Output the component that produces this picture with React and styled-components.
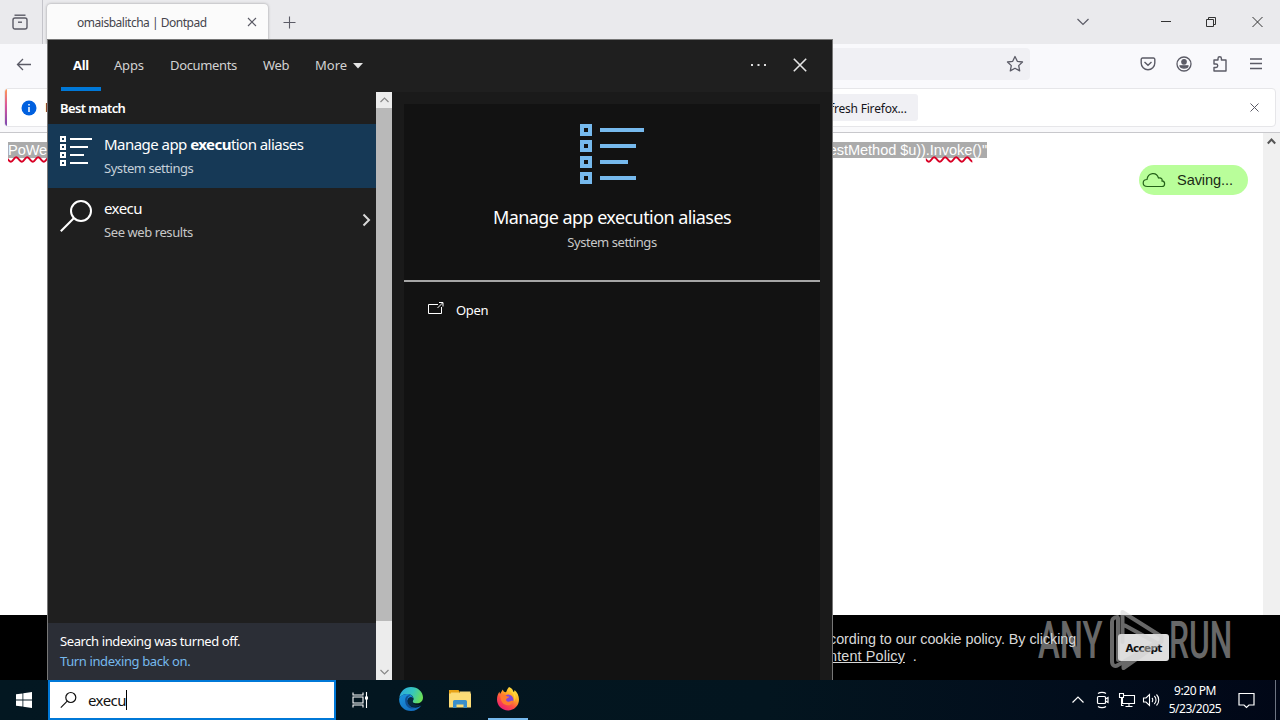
import React from "react";
import styled, { createGlobalStyle } from "styled-components";

const Global = createGlobalStyle`
  * { box-sizing: border-box; }
  body { margin: 0; overflow: hidden; background: #fff; }
`;

const segoe = `"Noto Sans", "Open Sans", sans-serif`;

const Desktop = styled.div`
  position: relative;
  width: 1280px;
  height: 720px;
  overflow: hidden;
  display: flex;
  flex-direction: column;
  font-family: ${segoe};
`;

const Text = styled.span`
  font-size: ${(p) => p.$size || 13}px;
  line-height: ${(p) => p.$lh || 20}px;
  letter-spacing: ${(p) => p.$ls || 0}px;
  color: ${(p) => p.$color || "#fff"};
  font-weight: ${(p) => p.$weight || 400};
  white-space: pre;
`;

/* Browser */
const TabStrip = styled.div`
  height: 44px;
  background: #eaeaed;
  display: flex;
  color: #5b5b66;
`;
const ViewButton = styled.div`
  width: 43px;
  height: 44px;
  border-right: 1px solid #c4c4ca;
  padding: 14px 0 0 12px;
`;
const Tab = styled.div`
  width: 221px;
  height: 40px;
  margin: 4px 0 0 4px;
  background: #fbfbfb;
  border-radius: 4px 4px 0 0;
  box-shadow: 0 0 3px rgba(0, 0, 0, 0.35);
  display: flex;
  justify-content: space-between;
  padding: 9px 11px 0 30px;
`;
const NewTab = styled.div`
  padding: 16px 0 0 15px;
  flex: 1;
`;
const WindowControls = styled.div`
  display: flex;
  padding: 15px 17px 0 0;
  gap: 35px;
`;
const ControlGap = styled.div`
  width: 2px;
`;
const Toolbar = styled.div`
  height: 44px;
  background: #f9f9fc;
  display: flex;
  align-items: flex-start;
  padding: 4px 16px 0;
`;
const BackButton = styled.div`
  width: 84px;
  padding-top: 10px;
`;
const UrlBar = styled.div`
  width: 930px;
  height: 32px;
  background: #f0f0f4;
  border-radius: 4px;
  display: flex;
  justify-content: flex-end;
  align-items: center;
  padding-right: 6px;
`;
const ToolbarIcons = styled.div`
  flex: 1;
  display: flex;
  justify-content: flex-end;
  gap: 20px;
  padding-top: 8px;
`;
const NoticeArea = styled.div`
  height: 45px;
  background: #f9f9fb;
  border-bottom: 1px solid #c8c8cc;
  padding: 0 4px 5px;
`;
const Notice = styled.div`
  height: 39px;
  background: #fff;
  border: 1px solid #e6e6e9;
  border-radius: 4px;
  display: flex;
  overflow: hidden;
`;
const NoticeStripe = styled.div`
  width: 2px;
  background: linear-gradient(#ff9a55, #d9559d 45%, #7a49b0);
`;
const InfoSlot = styled.div`
  padding: 11px 0 0 14px;
  width: 820px;
  display: flex;
  gap: 8px;
  font-family: "Liberation Sans", sans-serif;
`;
const RefreshButton = styled.div`
  width: 91px;
  height: 27px;
  margin: 5px auto 0 0;
  padding-left: 3px;
  background: #f0f0f4;
  border-radius: 3px;
`;
const NoticeClose = styled.div`
  padding: 14px 16px 0 0;
`;
const PageRow = styled.div`
  height: 482px;
  display: flex;
  background: #fff;
`;
const PageBody = styled.div`
  flex: 1;
  padding: 9px 15px 0 8px;
  display: flex;
  flex-direction: column;
`;
const CodeLine = styled.div`
  width: 979px;
  height: 16px;
  background: #ababab;
  display: flex;
  color: #fff;
  font: 14.6px/16px "Liberation Sans", Arial, sans-serif;
  letter-spacing: -0.08px;
  white-space: pre;
`;
const CodeStart = styled.span`
  width: 824px;
`;
const Misspelt = styled.span`
  text-decoration: underline wavy #d90024 1.5px;
  text-decoration-skip-ink: none;
  text-underline-offset: 1px;
`;
const SavePill = styled.div`
  align-self: flex-end;
  width: 109px;
  height: 30px;
  margin-top: 7px;
  border-radius: 15px;
  background: #b9fe9a;
  display: flex;
  align-items: center;
  gap: 11px;
  padding-left: 3px;
  color: #1b2b16;
  font: 14.6px/29px "Liberation Sans", Arial, sans-serif;
  letter-spacing: -0.1px;
`;
const PageScroll = styled.div`
  width: 17px;
  background: #f0f0f0;
  padding: 4px 0 0 4px;
`;
const CookieBar = styled.div`
  height: 65px;
  background: #000;
  display: flex;
  padding: 16px 0 0 829px;
  color: #d8d8d8;
  font: 14.4px/17px "Liberation Sans", Arial, sans-serif;
  white-space: pre;
`;
const CookieText = styled.div`
  width: 289px;
  letter-spacing: -0.05px;
`;
const PolicyLink = styled.u`
  letter-spacing: 0.13px;
`;
const AcceptButton = styled.div`
  width: 51px;
  height: 27px;
  margin-top: 3px;
  border-radius: 3px;
  background: #dedede;
  color: #111;
  text-align: center;
  font: bold 10.5px/28px "DejaVu Sans", sans-serif;
  letter-spacing: -0.7px;
`;

/* Search flyout */
const Flyout = styled.div`
  position: absolute;
  left: 47px;
  top: 39px;
  width: 786px;
  height: 641px;
  background: #1f1f1f;
  border: 1px solid #777;
  border-bottom: 0;
  display: flex;
  flex-direction: column;
`;
const FlyoutTabs = styled.div`
  height: 52px;
  display: flex;
  padding: 0 25px 0 13px;
`;
const FlyoutTab = styled.div`
  width: ${(p) => p.$w}px;
  height: 51px;
  padding: 15px 0 0 ${(p) => p.$pl || 0}px;
  border-bottom: 4px solid ${(p) => (p.$active ? "#0078d7" : "transparent")};
  display: flex;
  gap: 6px;
`;
const FlyoutActions = styled.div`
  margin-left: auto;
  display: flex;
  gap: 27px;
  padding-top: 18px;
`;
const FlyoutBody = styled.div`
  flex: 1;
  display: flex;
`;
const Results = styled.div`
  width: 328px;
  display: flex;
  flex-direction: column;
`;
const Heading = styled.div`
  height: 32px;
  padding: 6px 12px;
  display: flex;
`;
const Result = styled.div`
  height: 64px;
  background: ${(p) => (p.$selected ? "#163956" : "transparent")};
  display: flex;
  gap: 12px;
  padding: 12px 5px 0 12px;
`;
const ResultText = styled.div`
  display: flex;
  flex-direction: column;
  gap: 4px;
  flex: 1;
  margin-top: -2px;
`;
const ResultArrow = styled.div`
  padding-top: 13px;
`;
const IndexNotice = styled.div`
  height: 57px;
  margin-top: auto;
  background: #2b2e36;
  padding: 8px 12px 0;
  display: flex;
  flex-direction: column;
`;
const ResultsScroll = styled.div`
  width: 16px;
  background: #ececec;
  display: flex;
  flex-direction: column;
`;
const ScrollEnd = styled.div`
  height: 16px;
  display: grid;
  place-items: center;
  margin-top: ${(p) => (p.$last ? "auto" : 0)};
`;
const ScrollThumb = styled.div`
  height: 513px;
  background: #b9b9b9;
`;
const DetailArea = styled.div`
  flex: 1;
  background: #1a1a1a;
  padding: 12px 12px 0;
`;
const Detail = styled.div`
  height: 100%;
  background: #121212;
`;
const DetailHeader = styled.div`
  height: 178px;
  border-bottom: 2px solid #a5a5a5;
  padding-top: 20px;
  display: flex;
  flex-direction: column;
  align-items: center;
`;
const DetailTitle = styled(Text)`
  margin-top: 20px;
`;
const DetailAction = styled.div`
  display: flex;
  gap: 12px;
  padding: 18px 24px;
`;

/* Taskbar */
const Taskbar = styled.div`
  height: 40px;
  display: flex;
  background: linear-gradient(90deg, #031721, #03151f 60%, #020d1c 85%, #010717);
`;
const StartButton = styled.div`
  width: 48px;
  padding: 11px 0 0 16px;
`;
const SearchBox = styled.div`
  width: 288px;
  height: 40px;
  background: #fff;
  border: 2px solid #0078d7;
  padding: 8px 0 0 10px;
  display: flex;
  gap: 11px;
`;
const SearchGlyph = styled.div`
  padding-top: 1px;
`;
const Caret = styled.i`
  width: 1px;
  height: 20px;
  background: #000;
  margin-left: -11px;
`;
const TaskItem = styled.div`
  width: ${(p) => p.$w || 49}px;
  height: 40px;
  display: grid;
  place-items: center;
  border-bottom: 2px solid transparent;
`;
const FirstItem = styled(TaskItem)`
  padding: 1px 2px 0 0;
`;
const ActiveItem = styled(TaskItem)`
  width: 40px;
  margin-left: 4px;
  border-bottom-color: #76b9ed;
`;
const Tray = styled.div`
  margin-left: auto;
  display: flex;
  align-items: center;
  border-right: 1px solid #6d7482;
  margin-right: 4px;
`;
const TrayIcons = styled.div`
  display: flex;
  align-items: center;
  gap: 6px;
`;
const Clock = styled.div`
  width: 70px;
  display: flex;
  flex-direction: column;
  align-items: center;
`;
const ActionCenter = styled.div`
  width: 45px;
  padding: 1px 0 0 8px;
`;

const Watermark = styled.div`
  position: absolute;
  left: 1038px;
  top: 608px;
  height: 66px;
  width: 200px;
  display: flex;
  opacity: 0.5;
`;
const MarkWord = styled.div`
  width: ${(p) => p.$w}px;
  font: 500 52px/66px Roboto, sans-serif;
  color: #d0d0d0;
  white-space: nowrap;
  transform: scaleX(${(p) => p.$sx});
  transform-origin: 0 0;
`;

const Line = ({ w = 16, h = 16, sw = 1.2, c = "#5b5b66", d, children, vb }) => (
  <svg width={w} height={h} viewBox={vb || `0 0 ${w} ${h}`} fill="none" stroke={c} strokeWidth={sw} style={{ display: "block", flex: "none" }}>
    {d && <path d={d} />}
    {children}
  </svg>
);

const ListIcon = () => (
  <svg width="32" height="32" viewBox="0 0 32 32" fill="none" stroke="#fff" strokeWidth="2" style={{ flex: "none" }} shapeRendering="crispEdges">
    {[0, 8, 16, 24].map((y, i) => (
      <g key={y}>
        <rect x="1" y={y + 1} width="4" height="4" />
        <path d={`M10 ${y + 3}H${[32, 28, 24, 28][i]}`} />
      </g>
    ))}
  </svg>
);

const BigListIcon = () => (
  <svg width="64" height="60" viewBox="0 0 64 60" fill="none" stroke="#76b9ed" strokeWidth="4" shapeRendering="crispEdges">
    {[0, 16, 32, 48].map((y, i) => (
      <g key={y}>
        <rect x="2" y={y + 2} width="8" height="8" />
        <path d={`M20 ${y + 6}H${[64, 56, 48, 56][i]}`} />
      </g>
    ))}
  </svg>
);

const Edge = () => (
  <svg width="24" height="24" viewBox="0 0 24 24">
    <defs>
      <linearGradient id="eg" x1="0" x2="1" y1=".2" y2=".5"><stop stopColor="#2ba7e0" /><stop offset=".55" stopColor="#35c6bd" /><stop offset="1" stopColor="#6bdf56" /></linearGradient>
      <linearGradient id="eb" x1="0" x2="1" y1="0" y2="1"><stop stopColor="#1a92dd" /><stop offset="1" stopColor="#1265b8" /></linearGradient>
    </defs>
    <path d="M.3 11C1 4.500 6 0 12 0c7 0 12 5 12 10.400 0 3.700-2.700 5.900-6.200 5.900-2.700 0-4.300-1-4.300-1.900 0-.6 1-1 1-2.700 0-2.500-2.700-4.700-6.300-4.700C4.500 7 1.700 8.700.3 11z" fill="url(#eg)" />
    <path d="M.2 11.500C1.500 8.600 4.600 7 8 7.100c3.500 0 5.900 2 6.200 4.100-1-1.100-3.800-1.200-5.100.7-2.400 3.500 1.100 9.200 6.900 8.800 2.500-.1 4.700-1.100 6.300-2.200C20.100 22 16.300 24 12 24 5.200 24-.5 18.500.2 11.500z" fill="url(#eb)" />
    <path d="M6.200 12c.5-2.500 2.800-4.200 5.200-3.500-2.900 1-3.600 3.300-2.800 5.900 1 3.500 3.900 6.100 7.800 6.300-4 2.300-11 0-10.200-8.700z" fill="#104e93" />
    <path d="M14.200 11.200c-1.200-1.300-3.600-1.100-4.900.6-1.300 2-.7 4.400.8 6.200 2.500 2.600 8 2.800 11.500-.2-3 .8-7-.2-8-2.600-.3-1.200 1-1.500.6-4z" fill="#062a42" />
  </svg>
);

const Folder = () => (
  <svg width="22" height="18" viewBox="0 0 22 18">
    <path d="M0 0h9.500l1 1.500V5H0z" fill="#e8a317" />
    <path d="M2 2.500h9V1.500h10.500V5H2z" fill="#f7d77a" />
    <path d="M0 3.500h22v14H0z" fill="#fddc76" />
    <path d="M4 18v-6.500a1.500 1.500 0 0 1 1.500-1.500h11a1.500 1.500 0 0 1 1.500 1.500V18h-3.500v-3.500h-7V18z" fill="#3b8fcb" />
  </svg>
);

const Firefox = () => (
  <svg width="24" height="24" viewBox="0 0 24 24">
    <defs>
      <linearGradient id="ff" x1=".85" y1="0" x2=".2" y2="1"><stop stopColor="#fff44f" /><stop offset=".35" stopColor="#ffae22" /><stop offset=".65" stopColor="#ff4f42" /><stop offset="1" stopColor="#e8177c" /></linearGradient>
    </defs>
    <path d="M13 0c3 1 4.200 3.300 4.500 5 1-.1 1-1.200.9-2 2.700 2 4.600 5.700 4.600 9.600C23 19 18 23.500 12 23.500S1 18.700 1 12.600C1 9 2.200 6.500 3.400 4.800L4 7l2.800-4.600c.3 1.600 1.400 2.700 3.200 2.800C10.800 4 11.200 1.800 13 0z" fill="url(#ff)" />
    <circle cx="12.200" cy="12.700" r="5.200" fill="#8048d8" />
    <path d="M4.500 8c2.500-1 4.700-.6 6.700 1.400l2 .2c-.2 1.600-2.400 1.600-3 2.600-.4 1 .2 2.600 2.200 2.500 2.200-.1 3.200-1.500 5-.5-1 3.100-3.700 4.500-6.400 4.100C6.500 17.700 4 13.500 4.500 8z" fill="#ff7b2e" />
    <path d="M13.500 3c4 3 6 7 4.500 11.500 3-3.500 2-9-4.500-11.500z" fill="#ffd83d" />
  </svg>
);

export default function App() {
  return (
    <Desktop>
      <Global />
      <TabStrip>
        <ViewButton>
          <Line w={16} h={17} sw={1.4}><path d="M2.500 1.200h11" /><rect x="1" y="4" width="14" height="11" rx="2" /><path d="M6 8.200h4" /></Line>
        </ViewButton>
        <Tab>
          <Text $size={12} $color="#45454d" $ls={-0.48}>omaisbalitcha | Dontpad</Text>
          <Line w={10} h={20} sw={1.1} d="M1 5l8 8M9 5l-8 8" />
        </Tab>
        <NewTab><Line w={13} h={13} d="M6.500 .5v12M.5 6.500h12" sw={1.1} /></NewTab>
        <WindowControls>
          <Line w={12} h={14} d="M.5 4l5.500 5.500L11.500 4" />
          <ControlGap />
          <Line w={10} h={14} d="M0 6.500h10" c="#333" sw={1} />
          <Line w={11} h={14} c="#333" sw={1}><path d="M.5 4.500h7v7h-7zM2.500 4.500v-2h7v7h-2" /></Line>
          <Line w={11} h={14} d="M.5 2l10 10M10.500 2l-10 10" c="#333" sw={1} />
        </WindowControls>
      </TabStrip>
      <Toolbar>
        <BackButton><Line w={15} h={13} sw={1.3} d="M15 6.500H1.500M7 1L1.500 6.500 7 12" /></BackButton>
        <UrlBar>
          <Line w={18} h={18} sw={1.3}><path strokeLinejoin="round" d="M9 1.500l2.300 4.800 5.200.7-3.800 3.600 1 5.300L9 13.300l-4.700 2.600 1-5.300L1.500 7l5.200-.7z" /></Line>
        </UrlBar>
        <ToolbarIcons>
          <Line w={16} h={16} sw={1.4}><path d="M2.500 2h11a1.300 1.300 0 0 1 1.300 1.300V7a6.800 6.800 0 0 1-13.600 0V3.300A1.300 1.300 0 0 1 2.500 2zM4.500 6L8 9.300 11.500 6" /></Line>
          <Line w={16} h={16} sw={1.3}><circle cx="8" cy="8" r="7" /><circle cx="8" cy="5.800" r="2.200" fill="#5b5b66" /><path d="M4 9.800h8c0 3-8 3-8 0z" fill="#5b5b66" /></Line>
          <Line w={16} h={16} sw={1.4}><path strokeLinejoin="round" d="M2 4h4V2.500a1.700 1.700 0 0 1 3.400 0V4H14v11H2v-3.500h2a1.700 1.700 0 0 0 0-3.500H2z" /></Line>
          <Line w={16} h={16} d="M2 3h12M2 7.500h12M2 12.500h12" sw={1.3} />
        </ToolbarIcons>
      </Toolbar>
      <NoticeArea>
        <Notice>
          <NoticeStripe />
          <InfoSlot>
            <svg width="16" height="16"><circle cx="8" cy="8" r="7.500" fill="#0060df" /><path d="M8 7v5M8 4v1.600" stroke="#fff" strokeWidth="1.500" /></svg>
            <Text $color="#111" $lh={16}>I</Text>
          </InfoSlot>
          <RefreshButton><Text $size={12} $lh={29} $color="#15141a" $ls={-0.2}>fresh Firefox...</Text></RefreshButton>
          <NoticeClose><Line w={9} h={9} d="M.5 .5l8 8M8.500 .5l-8 8" sw={1} /></NoticeClose>
        </Notice>
      </NoticeArea>
      <PageRow>
        <PageBody>
          <CodeLine>
            <CodeStart><Misspelt>PoWe</Misspelt></CodeStart>
            <span>estMethod $u))<Misspelt>.Invoke</Misspelt>()"</span>
          </CodeLine>
          <SavePill>
            <Line w={24} h={18} sw={1.2} c="#236118" d="M5.500 15.500C-.5 15.300.2 8.500 5 8.500 6 1.500 14.500.5 16.500 7c3.500-.5 4 2 3.500 2.800 3.500.2 3.500 5.700 0 5.700z" />
            Saving...
          </SavePill>
        </PageBody>
        <PageScroll><Line w={9} h={8} d="M.8 6.500l3.700-4 3.700 4" sw={2} c="#555" /></PageScroll>
      </PageRow>
      <CookieBar>
        <CookieText>cording to our cookie policy. By clicking{"\n"}<PolicyLink>ntent Policy</PolicyLink>  .</CookieText>
        <AcceptButton>Accept</AcceptButton>
      </CookieBar>

      <Taskbar>
        <StartButton>
          <svg width="16" height="16"><path fill="#fff" d="M0 2.300l6.500-.9v6.100H0zM7.300 1.300L16 0v7.500H7.300zM0 8.400h6.500v6.200L0 13.700zM7.300 8.400H16V16l-8.700-1.300z" /></svg>
        </StartButton>
        <SearchBox>
          <SearchGlyph><Line w={17} h={18} c="#111" sw={1.2}><circle cx="10.800" cy="6.500" r="5" /><path d="M7.200 10.200L.8 16.600" /></Line></SearchGlyph>
          <Text $size={15} $color="#111" $ls={-0.55}>execu</Text>
          <Caret />
        </SearchBox>
        <FirstItem $w={50}>
          <Line w={16} h={16} c="#fff" sw={1.1}><path d="M1 0.500v2.500h10V.5M1 15.500V13h10v2.500M1 5h10v6H1zM14.500 0v16" /><path d="M13 4.500h3v3h-3z" fill="#fff" stroke="none" /></Line>
        </FirstItem>
        <TaskItem><Edge /></TaskItem>
        <TaskItem><Folder /></TaskItem>
        <ActiveItem><Firefox /></ActiveItem>
        <Tray>
          <TrayIcons>
            <Line w={20} h={16} c="#fff" d="M4.500 10.500l5.500-5.500 5.500 5.500" />
            <Line w={18} h={18} c="#fff" sw={1.2}><rect x="3.500" y="5.500" width="8" height="7" rx="1" /><path d="M11.500 8l2.500-1.500v5L11.500 10M4 2.500c2-1.500 6-1.500 8 0M4 15.500c2 1.500 6 1.500 8 0" /></Line>
            <Line w={18} h={18} c="#fff" sw={1.1}><path d="M6 4.500h10.500v8H4.500V7M11 12.500V15M7.500 15.500h7M1.500 2.500h4v4h-4zM3.500 6.500v8h2" /></Line>
            <Line w={18} h={18} c="#fff" sw={1.1}><path d="M1.500 7h2.500l3.500-3.500v11L4 11H1.500zM10 7c1 1 1 3 0 4M12.300 5c2.300 2 2.300 6 0 8M14.500 3.500c3 3 3 8 0 11" /></Line>
          </TrayIcons>
          <Clock>
            <Text $size={12} $lh={18} $ls={-0.45}>9:20 PM</Text>
            <Text $size={12} $lh={18} $ls={-0.5}>5/23/2025</Text>
          </Clock>
          <ActionCenter><Line w={18} h={18} c="#fff" d="M1 1.500h15v11.500h-5L8.500 15.500 6 13H1z" /></ActionCenter>
        </Tray>
      </Taskbar>

      <Flyout>
        <FlyoutTabs>
          <FlyoutTab $w={40} $pl={12} $active><Text $weight={700} $ls={-0.3}>All</Text></FlyoutTab>
          <FlyoutTab $w={69} $pl={13}><Text $color="#d2d2d2" $ls={-0.2}>Apps</Text></FlyoutTab>
          <FlyoutTab $w={93}><Text $color="#d2d2d2" $ls={-0.35}>Documents</Text></FlyoutTab>
          <FlyoutTab $w={52}><Text $color="#d2d2d2" $ls={-0.3}>Web</Text></FlyoutTab>
          <FlyoutTab $w={60}>
            <Text $color="#d2d2d2">More</Text>
            <svg width="10" height="20" style={{ flex: "none" }}><path d="M0 8h10l-5 5.500z" fill="#e4e4e4" /></svg>
          </FlyoutTab>
          <FlyoutActions>
            <svg width="15" height="14"><path fill="#ddd" d="M0 6h2v2H0zM6.500 6h2v2h-2zM13 6h2v2h-2z" /></svg>
            <Line w={14} h={14} d="M.8 .8l12.400 12.400M13.200 .8L.8 13.200" c="#e4e4e4" sw={1.6} />
          </FlyoutActions>
        </FlyoutTabs>
        <FlyoutBody>
          <Results>
            <Heading><Text $weight={600} $ls={-0.62}>Best match</Text></Heading>
            <Result $selected>
              <ListIcon />
              <ResultText>
                <Text $size={15} $ls={-0.54}>Manage app <b>execu</b>tion aliases</Text>
                <Text $color="#c5d0d9" $ls={-0.45}>System settings</Text>
              </ResultText>
            </Result>
            <Result>
              <Line w={32} h={32} c="#fff" sw={2}><circle cx="21" cy="11" r="10" /><path d="M14 18L.8 31.200" /></Line>
              <ResultText>
                <Text $size={15} $ls={-0.55}>execu</Text>
                <Text $color="#c8c8c8" $ls={-0.42}>See web results</Text>
              </ResultText>
              <ResultArrow><Line w={9} h={14} d="M1.500 1.500L7 7l-5.500 5.500" c="#d8d8d8" sw={2} /></ResultArrow>
            </Result>
            <IndexNotice>
              <Text $ls={-0.4}>Search indexing was turned off.</Text>
              <Text $color="#76b9ed" $ls={-0.38}>Turn indexing back on.</Text>
            </IndexNotice>
          </Results>
          <ResultsScroll>
            <ScrollEnd><Line w={9} h={6} d="M.5 5l4-4 4 4" c="#888" /></ScrollEnd>
            <ScrollThumb />
            <ScrollEnd $last><Line w={9} h={6} d="M.5 1l4 4 4-4" c="#888" /></ScrollEnd>
          </ResultsScroll>
          <DetailArea>
            <Detail>
              <DetailHeader>
                <BigListIcon />
                <DetailTitle $size={18} $lh={26} $ls={-0.57}>Manage app execution aliases</DetailTitle>
                <Text $lh={24} $color="#c8c8c8" $ls={-0.45}>System settings</Text>
              </DetailHeader>
              <DetailAction>
                <Line w={16} h={16} c="#fff" sw={1}><path d="M10 4.500H.5v9h13V7M9.500 8l5-5M11 2.500h4v4" /></Line>
                <Text $ls={-0.35}>Open</Text>
              </DetailAction>
            </Detail>
          </DetailArea>
        </FlyoutBody>
      </Flyout>

      <Watermark>
        <MarkWord $w={71} $sx={0.63}>ANY</MarkWord>
        <svg width="60" height="66" viewBox="0 0 60 66" fill="none" stroke="#d0d0d0" strokeWidth="4" strokeLinejoin="round" strokeLinecap="round" style={{ flex: "none" }}>
          <path d="M8.500 9C4 9.500 3 11 3 14v39c0 5 3 6 6 4l26-15M9 10v42" />
          <path d="M13.500 34V4l39 24.500v5L14.500 60v-4L47 34.500 16 17.500" />
        </svg>
        <MarkWord $w={60} $sx={0.61}>RUN</MarkWord>
      </Watermark>
    </Desktop>
  );
}
